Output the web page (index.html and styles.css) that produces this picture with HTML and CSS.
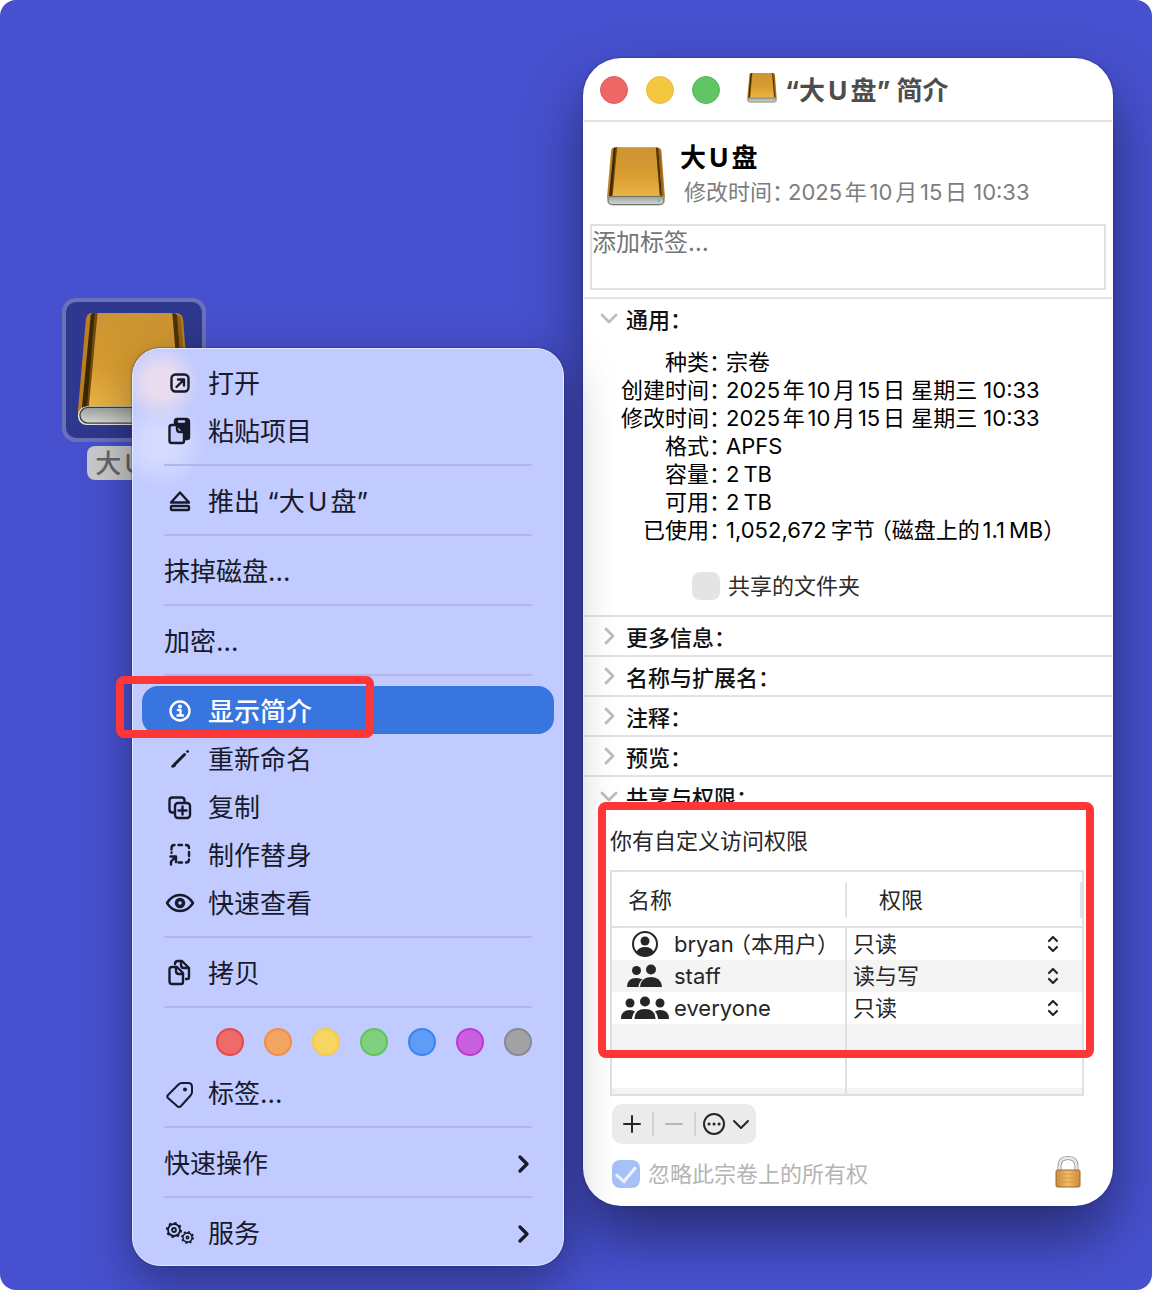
FILE: index.html
```html
<!DOCTYPE html>
<html lang="zh-CN">
<head>
  <meta charset="UTF-8">
  <meta name="viewport" content="width=device-width, initial-scale=1.0">
  <title>“大U盘”简介</title>
  <link rel="stylesheet" href="styles.css">
</head>
<body>
  <svg class="defs" width="0" height="0" aria-hidden="true">
    <defs>
      <linearGradient id="gold" x1="0" y1="0" x2="0" y2="1">
        <stop offset="0" stop-color="#cc9433"/>
        <stop offset=".55" stop-color="#d89c30"/>
        <stop offset="1" stop-color="#eab545"/>
      </linearGradient>
      <linearGradient id="silver" x1="0" y1="0" x2="0" y2="1">
        <stop offset="0" stop-color="#9da19d"/>
        <stop offset="1" stop-color="#d4d7d2"/>
      </linearGradient>
      <linearGradient id="brass" x1="0" y1="0" x2="1" y2="0">
        <stop offset="0" stop-color="#c98a3c"/>
        <stop offset=".5" stop-color="#f3bb66"/>
        <stop offset="1" stop-color="#c98a3c"/>
      </linearGradient>
    </defs>
    <symbol id="drive" viewBox="0 0 116 118">
      <path d="M15 1h86q6 0 7 7l7 92q1 15-14 15H14Q0 115 1 100L9 8q1-7 6-7z" fill="#b97f22"/>
      <path d="M14 3L5 98h6L20 1h-3q-2 0-3 2z" fill="#3a2703"/>
      <path d="M18 1L10 98h4L23 1z" fill="#6f4b0c"/>
      <path d="M21 1h76l8 96H12z" fill="url(#gold)"/>
      <path d="M97 1l8 96h4L102 3q-2-2-5-2z" fill="#4d3406"/>
      <path d="M102 3l7 94h3L106 8q-1-4-4-5z" fill="#946116"/>
      <rect x="1" y="96" width="114" height="19" rx="9" fill="#e4e6e2"/>
      <rect x="3" y="97" width="110" height="16" rx="8" fill="url(#silver)" stroke="#3c403c" stroke-width="1.4"/>
      <circle cx="103" cy="105" r="2.5" fill="#62c95b"/>
    </symbol>
    <symbol id="updown" viewBox="0 0 12 18">
      <path d="M2 6l4-4 4 4M2 12l4 4 4-4" fill="none" stroke="currentColor" stroke-width="2.2" stroke-linecap="round" stroke-linejoin="round"/>
    </symbol>
    <symbol id="next" viewBox="0 0 14 20">
      <path d="M2 3l7 7-7 7" fill="none" stroke="currentColor" stroke-width="3.2" stroke-linecap="round" stroke-linejoin="round"/>
    </symbol>
    <symbol id="arrow" viewBox="0 0 18 18">
      <path d="M6 2l7 7-7 7" fill="none" stroke="currentColor" stroke-width="2.8" stroke-linecap="round" stroke-linejoin="round"/>
    </symbol>
  </svg>

  <main class="desktop">
    <div class="disk">
      <div class="disk-frame"><svg class="disk-icon"><use href="#drive"/></svg></div>
      <span class="disk-name">大U盘</span>
    </div>

    <div class="menu" role="menu">
      <button class="item" role="menuitem">
        <svg class="icon" viewBox="0 0 32 32"><rect x="7.500" y="6.500" width="17" height="17" rx="4"/><path d="M12.500 19l7-7M14 11.500h6v6"/></svg>
        <span>打开</span>
      </button>
      <button class="item" role="menuitem">
        <svg class="icon" viewBox="0 0 32 32"><path class="solid" d="M13 3h9q3 0 3 3v15q0 2-2 2h-2V15l-6-6h-4V5q0-2 2-2z"/><path d="M15 5.500h5" stroke="#c2cbff"/><path d="M8 9h5l7 7v9q0 2-2 2H8q-2.500 0-2.500-2V11q0-2 2.500-2z" fill="#c2cbff"/><path d="M13 9v4q0 3 3 3h4"/></svg>
        <span>粘贴项目</span>
      </button>
      <hr class="line">
      <button class="item" role="menuitem">
        <svg class="icon" viewBox="0 0 32 32"><path d="M16 6.500L25 16.500H7z"/><rect x="7" y="20" width="18" height="4" rx="1"/></svg>
        <span>推出 “大U盘”</span>
      </button>
      <hr class="line">
      <button class="item" role="menuitem"><span>抹掉磁盘…</span></button>
      <hr class="line">
      <button class="item" role="menuitem"><span>加密…</span></button>
      <hr class="line">
      <button class="item active" role="menuitem">
        <svg class="icon" viewBox="0 0 32 32"><circle cx="16" cy="15" r="9.500"/><circle class="solid" cx="16" cy="10.500" r=".8"/><path d="M14 14h2.500v5.500M13.500 19.500h5.500"/></svg>
        <span>显示简介</span>
      </button>
      <button class="item" role="menuitem">
        <svg class="icon" viewBox="0 0 32 32"><path d="M10 21L20.500 10.500" stroke-width="3"/><path d="M8.500 22.500l2-1M23.500 7.500l.2-.2" stroke-width="2.600"/></svg>
        <span>重新命名</span>
      </button>
      <button class="item" role="menuitem">
        <svg class="icon" viewBox="0 0 32 32"><path d="M10 20.500H8.500q-3 0-3-3v-9q0-3 3-3h9q3 0 3 3V10"/><rect x="11" y="11" width="15" height="15" rx="3"/><path d="M18.500 14.500v8M14.500 18.500h8"/></svg>
        <span>复制</span>
      </button>
      <button class="item" role="menuitem">
        <svg class="icon" viewBox="0 0 32 32"><path d="M7.500 9.500V8q0-3 3-3M14.500 5h3.500M22 5q3 0 3 3M25 12v4M25 19.500q0 3-3 3M18 22.500h-3.500M7.500 12.500v.2"/><path d="M12 22v-5.500M12 16.500H6.500M12 16.500l-5 5v3"/></svg>
        <span>制作替身</span>
      </button>
      <button class="item" role="menuitem">
        <svg class="icon" viewBox="0 0 32 32"><path d="M3 15q5-8 13-8t13 8q-5 8-13 8T3 15z"/><circle cx="16" cy="15" r="3.500" stroke-width="3.400"/></svg>
        <span>快速查看</span>
      </button>
      <hr class="line">
      <button class="item" role="menuitem">
        <svg class="icon" viewBox="0 0 32 32"><path d="M8 9h5l6 6v9q0 2-2 2H8q-2.500 0-2.500-2.500v-12Q5.500 9 8 9z"/><path d="M12 9v4q0 3 3 3h4M11 6q0-3 3-3h4l7 7v9q0 2-2 2h-1M17 3v4q0 3 3 3h5"/></svg>
        <span>拷贝</span>
      </button>
      <hr class="line">
      <div class="colors">
        <button class="color red" aria-label="红色"></button>
        <button class="color orange" aria-label="橙色"></button>
        <button class="color yellow" aria-label="黄色"></button>
        <button class="color green" aria-label="绿色"></button>
        <button class="color blue" aria-label="蓝色"></button>
        <button class="color purple" aria-label="紫色"></button>
        <button class="color gray" aria-label="灰色"></button>
      </div>
      <button class="item" role="menuitem">
        <svg class="icon thin" viewBox="0 0 32 32"><path d="M4 17L14.500 6.500Q16 5 18 5h6q4 0 4 4v5q0 2-1.500 3.500L17 28q-2 2-4 0l-9-8q-1.500-1.500 0-3z"/><circle class="solid" cx="21" cy="11.500" r="1"/></svg>
        <span>标签…</span>
      </button>
      <hr class="line">
      <button class="item" role="menuitem"><span>快速操作</span><svg class="next"><use href="#next"/></svg></button>
      <hr class="line">
      <button class="item" role="menuitem">
        <svg class="icon" viewBox="0 0 32 32"><g stroke-width="1.800"><circle cx="10" cy="12" r="6"/><circle cx="10" cy="12" r="2"/><circle cx="10" cy="12" r="7.200" stroke-dasharray="2.500 3.150" stroke-linecap="butt"/></g><g stroke-width="1.600"><circle cx="23.500" cy="19.500" r="4.600"/><circle cx="23.500" cy="19.500" r="1.200"/><circle cx="23.500" cy="19.500" r="5.700" stroke-dasharray="2 2.470" stroke-linecap="butt"/></g></svg>
        <span>服务</span><svg class="next"><use href="#next"/></svg>
      </button>
    </div>

    <section class="window">
      <header class="titlebar">
        <div class="lights">
          <button class="light close" aria-label="关闭"></button>
          <button class="light minimize" aria-label="最小化"></button>
          <button class="light zoom" aria-label="缩放"></button>
        </div>
        <svg class="title-icon"><use href="#drive"/></svg>
        <h1 class="title">“大U盘” 简介</h1>
      </header>

      <div class="summary">
        <svg class="summary-icon"><use href="#drive"/></svg>
        <div>
          <h2 class="name">大U盘</h2>
          <p class="modified"><span class="key">修改时间：</span>2025年10月15日 10:33</p>
        </div>
      </div>
      <textarea class="tags" placeholder="添加标签…" aria-label="标签"></textarea>

      <details class="section" open>
        <summary><svg class="arrow"><use href="#arrow"/></svg>通用：</summary>
        <dl class="info">
          <dt>种类：</dt><dd>宗卷</dd>
          <dt>创建时间：</dt><dd>2025年10月15日 星期三 10:33</dd>
          <dt>修改时间：</dt><dd>2025年10月15日 星期三 10:33</dd>
          <dt>格式：</dt><dd>APFS</dd>
          <dt>容量：</dt><dd>2&thinsp;TB</dd>
          <dt>可用：</dt><dd>2&thinsp;TB</dd>
          <dt>已使用：</dt><dd>1,052,672&thinsp;字节 （磁盘上的1.1&thinsp;MB）</dd>
        </dl>
        <label class="check shared"><input type="checkbox" disabled>共享的文件夹</label>
      </details>
      <details class="section"><summary><svg class="arrow"><use href="#arrow"/></svg>更多信息：</summary></details>
      <details class="section"><summary><svg class="arrow"><use href="#arrow"/></svg>名称与扩展名：</summary></details>
      <details class="section"><summary><svg class="arrow"><use href="#arrow"/></svg>注释：</summary></details>
      <details class="section"><summary><svg class="arrow"><use href="#arrow"/></svg>预览：</summary></details>
      <details class="section" open>
        <summary><svg class="arrow"><use href="#arrow"/></svg>共享与权限：</summary>
        <div class="sharing">
          <p class="access">你有自定义访问权限</p>
          <table class="users">
            <thead>
              <tr><th><span>名称</span></th><th><span>权限</span></th></tr>
            </thead>
            <tbody>
              <tr>
                <td><div class="user">
                  <svg class="user-icon" viewBox="0 0 48 28"><circle cx="24" cy="14" r="12" fill="none" stroke="currentColor" stroke-width="2"/><circle cx="24" cy="11" r="4.500"/><path d="M15.500 22q2-5 8.500-5t8.500 5q-4 3.500-8.500 3.500T15.500 22z"/></svg>
                  <span>bryan （本用户）</span>
                </div></td>
                <td><div class="right">
                  <select aria-label="bryan 权限"><option>只读</option><option>读与写</option></select>
                  <svg class="updown"><use href="#updown"/></svg>
                </div></td>
              </tr>
              <tr>
                <td><div class="user">
                  <svg class="user-icon" viewBox="0 0 48 28"><circle cx="15.500" cy="8.500" r="4.500"/><path d="M6 25q0-9 9.500-9 3.500 0 6 1.500-4 3-4 7.500z"/><circle cx="30" cy="7.500" r="5"/><path d="M19 25q1-10 11-10t11 10z"/></svg>
                  <span>staff</span>
                </div></td>
                <td><div class="right">
                  <select aria-label="staff 权限"><option>读与写</option><option>只读</option></select>
                  <svg class="updown"><use href="#updown"/></svg>
                </div></td>
              </tr>
              <tr>
                <td><div class="user">
                  <svg class="user-icon" viewBox="0 0 48 28"><circle cx="9" cy="9" r="4.500"/><path d="M0 25q0-9 9-9 3 0 5 1.500-3 3-3 7.500z"/><circle cx="39" cy="9" r="4.500"/><path d="M48 25q0-9-9-9-3 0-5 1.500 3 3 3 7.500z"/><circle cx="24" cy="7.500" r="5"/><path d="M13.500 25q0-10 10.500-10t10.500 10z"/></svg>
                  <span>everyone</span>
                </div></td>
                <td><div class="right">
                  <select aria-label="everyone 权限"><option>只读</option><option>读与写</option></select>
                  <svg class="updown"><use href="#updown"/></svg>
                </div></td>
              </tr>
              <tr><td></td><td></td></tr>
              <tr><td></td><td></td></tr>
              <tr class="rest"><td></td><td></td></tr>
            </tbody>
          </table>
          <div class="tools">
            <button class="tool" aria-label="添加"><svg viewBox="0 0 20 20" width="20" height="20"><path d="M10 2v16M2 10h16"/></svg></button>
            <button class="tool" aria-label="移除" disabled><svg viewBox="0 0 20 20" width="20" height="20"><path d="M2 10h16"/></svg></button>
            <button class="tool more" aria-label="更多操作">
              <svg viewBox="0 0 24 24" width="24" height="24"><circle cx="12" cy="12" r="10"/><path d="M7 12h.1M12 12h.1M17 12h.1" stroke-width="3"/></svg>
              <svg viewBox="0 0 18 12" width="18" height="12"><path d="M2 3l7 7 7-7"/></svg>
            </button>
          </div>
          <div class="bottom">
            <label class="check ignore"><input type="checkbox" checked disabled>忽略此宗卷上的所有权</label>
            <button class="lock" aria-label="锁定">
              <svg viewBox="0 0 28 32" width="28" height="32"><path d="M5.500 15V10q0-8 8.500-8t8.500 8v5" fill="none" stroke="#8c9494" stroke-width="4"/><path d="M5.500 15V10q0-8 8.500-8t8.500 8v5" fill="none" stroke="#e6eaea" stroke-width="2.400"/><rect x="2" y="14" width="24" height="17" rx="1.500" fill="url(#brass)" stroke="#9c6930"/><path d="M3 18h22M3 22h22M3 26h22" stroke="#d59a4c"/></svg>
            </button>
          </div>
        </div>
      </details>
    </section>

    <div class="mark mark-item"></div>
    <div class="mark mark-sharing"></div>
  </main>
</body>
</html>
```
FILE: styles.css
```css
*{
  box-sizing: border-box;
}
body{
  margin: 0;
  background: #fff;
  font-family: Inter, "Noto Sans CJK SC", sans-serif;
  font-size: 22px;
  line-height: 28px;
  text-autospace: normal;
}
h1,h2,p,dl,dd{
  margin: 0;
}
button,select,textarea{
  font: inherit;
  color: inherit;
  border: 0;
  padding: 0;
  background: none;
  text-autospace: inherit;
}
.defs{
  position: absolute;
}
.desktop{
  position: relative;
  min-height: 100vh;
  overflow: hidden;
  border-radius: 16px;
  background: #4751cf;
}

/* disk on the desktop */
.disk{
  position: absolute;
  left: 62px;
  top: 298px;
  display: flex;
  flex-direction: column;
  align-items: center;
  gap: 4px;
}
.disk-frame{
  display: flex;
  padding: 10px;
  border: 4px solid #6b71b9;
  border-radius: 14px;
  background: #2f388f;
}
.disk-icon{
  width: 116px;
  height: 116px;
}
.disk-name{
  padding: 1px 8px 0;
  border-radius: 8px;
  background: #cacacc;
  color: #666;
  font-size: 26px;
  font-weight: 500;
  line-height: 33px;
}

/* context menu */
.menu{
  position: absolute;
  z-index: 1;
  left: 132px;
  top: 348px;
  width: 432px;
  padding: 9px;
  border: 1px solid #e4e9ff;
  border-radius: 28px;
  background:
    radial-gradient(circle at 28px 34px, #eadcee 0, #eadcee 14px, #eadcee00 38px),
    radial-gradient(circle at 28px 96px, #d5dbff 0, #d5dbff 14px, #d5dbff00 44px),
    #c2cbff;
  box-shadow: 0 0 2px #1c2470, 0 16px 50px rgba(0,0,0,.38);
  color: #171a2b;
}
.item{
  display: flex;
  align-items: center;
  gap: 12px;
  width: 100%;
  height: 48px;
  padding: 3px 22px 0;
  border-radius: 16px;
  font-size: 26px;
  text-align: left;
}
.item.active{
  background: #3975de;
  color: #fff;
  font-weight: 500;
}
.icon{
  width: 32px;
  height: 32px;
  fill: none;
  stroke: currentColor;
  stroke-width: 2.4;
  stroke-linecap: round;
  stroke-linejoin: round;
}
.icon.thin{
  stroke-width: 2;
}
.icon .solid{
  fill: currentColor;
}
.next{
  width: 14px;
  height: 20px;
  margin-left: auto;
}
.line{
  height: 2px;
  margin: 10px 22px;
  border: 0;
  background: #b0b7e6;
}
.colors{
  display: flex;
  justify-content: flex-end;
  align-items: center;
  gap: 20px;
  height: 50px;
  padding: 0 22px 2px;
}
.color{
  width: 28px;
  height: 28px;
  border: 2px solid;
  border-radius: 50%;
}
.red{ background: #ed6b68; border-color: #e8484a; }
.orange{ background: #f3a461; border-color: #ee9144; }
.yellow{ background: #f7d564; border-color: #f4cd48; }
.green{ background: #80cf7f; border-color: #5fc560; }
.blue{ background: #5f9cf6; border-color: #3b82f0; }
.purple{ background: #ca60e0; border-color: #b93bd4; }
.gray{ background: #a2a2a6; border-color: #89898f; }

/* info window */
.window{
  position: absolute;
  left: 583px;
  top: 58px;
  width: 530px;
  padding: 0 1px;
  border-radius: 38px;
  background: #fff;
  box-shadow: 0 0 2px #1c2470, 0 30px 60px rgba(0,0,0,.45);
  color: #111;
}
.titlebar{
  display: flex;
  align-items: center;
  height: 64px;
  padding: 2px 16px 0;
  border-bottom: 2px solid #e3e3e3;
}
.lights{
  display: flex;
  gap: 18px;
}
.light{
  width: 28px;
  height: 28px;
  border: 1px solid;
  border-radius: 50%;
}
.close{ background: #ec6765; border-color: #e25b59; }
.minimize{ background: #f3c840; border-color: #e8bd38; }
.zoom{ background: #62c565; border-color: #56b959; }
.title-icon{
  width: 30px;
  height: 32px;
  margin: 0 8px 4px 27px;
}
.title{
  padding-top: 2px;
  color: #4d4d4d;
  font-size: 26px;
  font-weight: 700;
}
.summary{
  display: flex;
  gap: 14px;
  padding: 20px 22px 0;
}
.summary-icon{
  width: 60px;
  height: 60px;
  margin-top: 5px;
}
.name{
  color: #000;
  font-size: 26px;
  line-height: 32px;
}
.modified{
  padding: 4px;
  color: #7d7d7d;
}
.key,dt,summary{
  font-feature-settings: "halt";
}
.key{
  margin-right: 5px;
}
.tags{
  display: block;
  width: calc(100% - 12px);
  height: 66px;
  margin: 14px 6px 7px;
  border: 2px solid #e0e0e0;
  font-size: 24px;
  line-height: 34px;
  resize: none;
}
.tags::placeholder{
  color: #757575;
}
.section{
  border-top: 2px solid #e3e3e3;
}
summary{
  display: flex;
  align-items: center;
  gap: 8px;
  height: 38px;
  padding: 4px 16px 0;
  font-weight: 500;
  list-style: none;
}
.arrow{
  width: 18px;
  height: 18px;
  margin-top: -4px;
  color: #bdbdbd;
}
.section[open] .arrow{
  transform: rotate(90deg);
}
.info{
  display: grid;
  grid-template-columns: 136px 1fr;
  column-gap: 6px;
  margin-top: 11px;
  color: #000;
  font-feature-settings: "halt";
}
dt{
  text-align: right;
}
.check{
  display: flex;
  align-items: center;
  gap: 8px;
}
.check input{
  appearance: none;
  display: grid;
  place-items: center;
  width: 28px;
  height: 28px;
  margin: 0;
  border-radius: 8px;
  background: #e4e4e4;
}
.check input:checked{
  background: #a6c1f8;
}
.check input:checked::before{
  content: "";
  width: 9px;
  height: 17px;
  margin-bottom: 4px;
  border: solid #eef3ff;
  border-width: 0 3px 3px 0;
  transform: rotate(40deg);
}
.shared{
  padding: 28px 16px 15px 108px;
  color: #2b2b2b;
}
.sharing{
  padding: 12px 28px 18px 26px;
  color: #262626;
}
.users{
  width: 100%;
  margin-top: 15px;
  border: 2px solid #e0e0e0;
  border-spacing: 0;
  table-layout: fixed;
}
.users th{
  height: 56px;
  padding: 10px 0 8px;
  border-bottom: 2px solid #e0e0e0;
  font-weight: 400;
  text-align: left;
}
.users th span{
  display: block;
  padding: 4px 16px;
  border-right: 2px solid #e3e3e3;
}
.users th + th span{
  padding-left: 32px;
}
.users td{
  height: 32px;
  padding: 0;
}
.users td:first-child{
  border-right: 2px solid #e0e0e0;
}
.users tbody tr:nth-child(even){
  background: #f4f4f4;
}
.users .rest td{
  height: 6px;
}
.user,.right{
  display: flex;
  align-items: center;
}
.user{
  gap: 5px;
  padding-left: 9px;
  font-feature-settings: "halt";
}
.user-icon{
  width: 48px;
  height: 28px;
  fill: currentColor;
}
.right{
  padding: 0 23px 0 6px;
}
.right select{
  flex: 1;
  appearance: none;
}
.updown{
  width: 12px;
  height: 18px;
}
.tools{
  display: flex;
  width: max-content;
  margin: 8px 2px 16px;
  padding: 8px 0;
  border-radius: 10px;
  background: #ebebeb;
}
.tool{
  display: flex;
  align-items: center;
  gap: 6px;
  height: 24px;
  padding: 0 10px;
}
.tool + .tool{
  border-left: 2px solid #d2d2d2;
}
.tool.more{
  padding: 0 6px;
}
.tool svg{
  fill: none;
  stroke: currentColor;
  stroke-width: 2;
  stroke-linecap: round;
  stroke-linejoin: round;
}
.tool:disabled{
  color: #b5b5b5;
}
.bottom{
  display: flex;
  justify-content: space-between;
  align-items: center;
  height: 28px;
  padding: 0 2px;
}
.ignore{
  color: #b4b4b4;
}
.lock{
  display: flex;
  padding-bottom: 4px;
}

/* red marks over the menu item and the sharing box */
.mark{
  position: absolute;
  z-index: 2;
  border: 8px solid #fd3737;
  border-radius: 8px;
  pointer-events: none;
}
.mark-item{
  left: 116px;
  top: 676px;
  width: 258px;
  height: 62px;
}
.mark-sharing{
  left: 598px;
  top: 802px;
  width: 496px;
  height: 256px;
}
```
